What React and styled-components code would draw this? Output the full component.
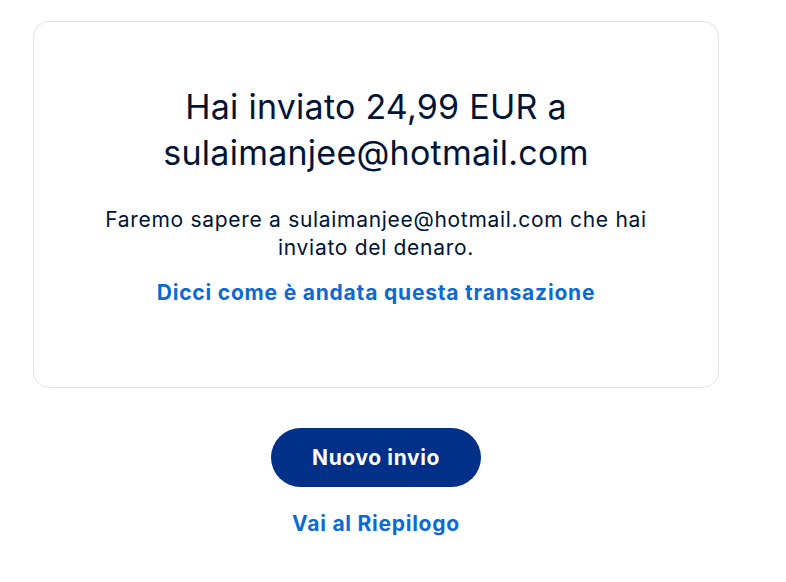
import React from 'react'
import styled, { createGlobalStyle } from 'styled-components'

const GlobalStyle = createGlobalStyle`
  html, body {
    margin: 0;
    padding: 0;
    background: #ffffff;
  }
  body {
    font-family: Inter, "Liberation Sans", Arial, sans-serif;
    color: #001435;
  }
`

const Page = styled.main`
  width: 686px;
  padding: 21px 0 0 33px;
  display: flex;
  flex-direction: column;
  align-items: center;
`

const Card = styled.section`
  box-sizing: border-box;
  width: 100%;
  height: 367px;
  border: 1px solid #e3e3e3;
  border-radius: 16px;
  padding: 62px 20px 0;
  display: flex;
  flex-direction: column;
  align-items: center;
  text-align: center;
`

const Heading = styled.h1`
  margin: 0;
  font-size: 34px;
  line-height: 46px;
  font-weight: 400;
  letter-spacing: 0.25px;
  color: #001435;
`

const Message = styled.p`
  margin: 30px 0 0;
  font-size: 21px;
  line-height: 28px;
  letter-spacing: 0.7px;
  color: #001435;
`

const Link = styled.a`
  display: inline-block;
  font-weight: 700;
  font-size: 21px;
  letter-spacing: ${p => p.spacing || 0.8}px;
  color: #0b6ad3;
  text-decoration: none;
  cursor: pointer;
  margin-top: ${p => p.top || 0}px;
`

const PrimaryButton = styled.button`
  margin-top: 40px;
  width: 210px;
  height: 59px;
  border: none;
  border-radius: 30px;
  background: #003087;
  color: #ffffff;
  font-family: inherit;
  font-size: 21px;
  font-weight: 700;
  letter-spacing: 0.6px;
  cursor: pointer;
`

export default function App() {
  return (
    <>
      <GlobalStyle />
      <Page>
        <Card>
          <Heading>
            Hai inviato 24,99 EUR a
            <br />
            sulaimanjee@hotmail.com
          </Heading>
          <Message>
            Faremo sapere a sulaimanjee@hotmail.com che hai
            <br />
            inviato del denaro.
          </Message>
          <Link top={18}>Dicci come è andata questa transazione</Link>
        </Card>
        <PrimaryButton>Nuovo invio</PrimaryButton>
        <Link spacing={0.75} top={24}>Vai al Riepilogo</Link>
      </Page>
    </>
  )
}
